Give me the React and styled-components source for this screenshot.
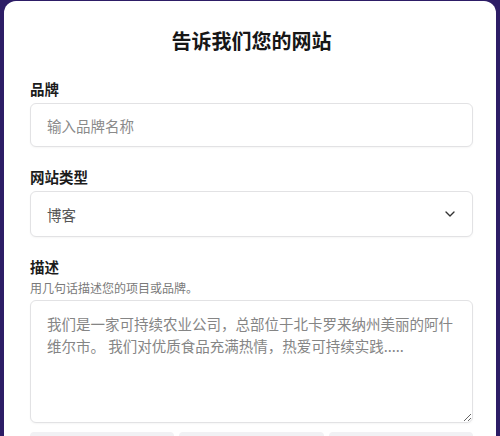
import React, { useState } from "react"
import styled, { createGlobalStyle } from "styled-components"
import { ChevronDown } from "lucide-react"

const GlobalStyle = createGlobalStyle`
    html, body {
        margin: 0;
        padding: 0;
        background: #2d1d66;
        font-family: "Noto Sans CJK SC", "Noto Sans", sans-serif;
        overflow: hidden;
    }
    * { box-sizing: border-box; }
`

const Card = styled.div`
    margin: 1px 4px 0 4px;
    width: 492px;
    height: calc(100vh - 1px);
    overflow: hidden;
    background: #ffffff;
    border-radius: 12px 12px 0 0;
    padding: 26px 23px 0 26px;
    display: flex;
    flex-direction: column;
`

const Title = styled.h1`
    margin: 0 0 24px;
    font-size: 20px;
    line-height: 28px;
    font-weight: 700;
    color: #161616;
    text-align: center;
`

const Fields = styled.div`
    display: flex;
    flex-direction: column;
    gap: 20px;
`

const Field = styled.div`
    display: flex;
    flex-direction: column;
`

const Label = styled.label`
    font-size: 14.5px;
    line-height: 20px;
    font-weight: 700;
    color: #1c1c1c;
    margin-bottom: ${({ $tight }) => ($tight ? "0" : "4px")};
`

const Hint = styled.div`
    font-size: 12px;
    line-height: 18px;
    color: #7a7a7a;
    margin: 2px 0 3px;
`

const boxStyle = `
    width: 100%;
    background: #ffffff;
    border: 1px solid #e2e2e4;
    border-radius: 6px;
    box-shadow: 0 1px 2px rgba(0, 0, 0, 0.04);
    font-family: "Noto Sans CJK SC", "Noto Sans", sans-serif;
    font-size: 14.5px;
    color: #2a2a2a;
    outline: none;
`

const TextInput = styled.input`
    ${boxStyle}
    height: 44px;
    padding: 0 16px;

    &::placeholder { color: #8a8a8a; }
`

const SelectButton = styled.button`
    ${boxStyle}
    height: 46px;
    padding: 0 14px 0 16px;
    display: flex;
    align-items: center;
    justify-content: space-between;
    color: #555555;
    cursor: pointer;
    text-align: left;

    svg { color: #333; }
`

const TextArea = styled.textarea`
    ${boxStyle}
    height: 123px;
    padding: 12px 16px;
    line-height: 1.5;
    resize: vertical;

    &::placeholder { color: #858585; }
`

const Options = styled.div`
    display: grid;
    grid-template-columns: repeat(3, 1fr);
    gap: 5px;
    margin-top: 9px;
`

const Option = styled.div`
    height: 40px;
    background: #f1f1f4;
    border-radius: 4px 4px 0 0;
`

const App = () => {
    const [ brand, setBrand ] = useState("")
    const [ desc, setDesc ] = useState("")

    return (
        <>
            <GlobalStyle />
            <Card>
                <Title>告诉我们您的网站</Title>
                <Fields>
                    <Field>
                        <Label>品牌</Label>
                        <TextInput
                            value={ brand }
                            onChange={ e => setBrand(e.target.value) }
                            placeholder="输入品牌名称"
                        />
                    </Field>
                    <Field>
                        <Label>网站类型</Label>
                        <SelectButton type="button">
                            <span>博客</span>
                            <ChevronDown size={ 16 } strokeWidth={ 2 } />
                        </SelectButton>
                    </Field>
                    <Field>
                        <Label $tight>描述</Label>
                        <Hint>用几句话描述您的项目或品牌。</Hint>
                        <TextArea
                            value={ desc }
                            onChange={ e => setDesc(e.target.value) }
                            placeholder="我们是一家可持续农业公司，总部位于北卡罗来纳州美丽的阿什维尔市。 我们对优质食品充满热情，热爱可持续实践....."
                        />
                    </Field>
                </Fields>
                <Options>
                    <Option />
                    <Option />
                    <Option />
                </Options>
            </Card>
        </>
    )
}

export default App
